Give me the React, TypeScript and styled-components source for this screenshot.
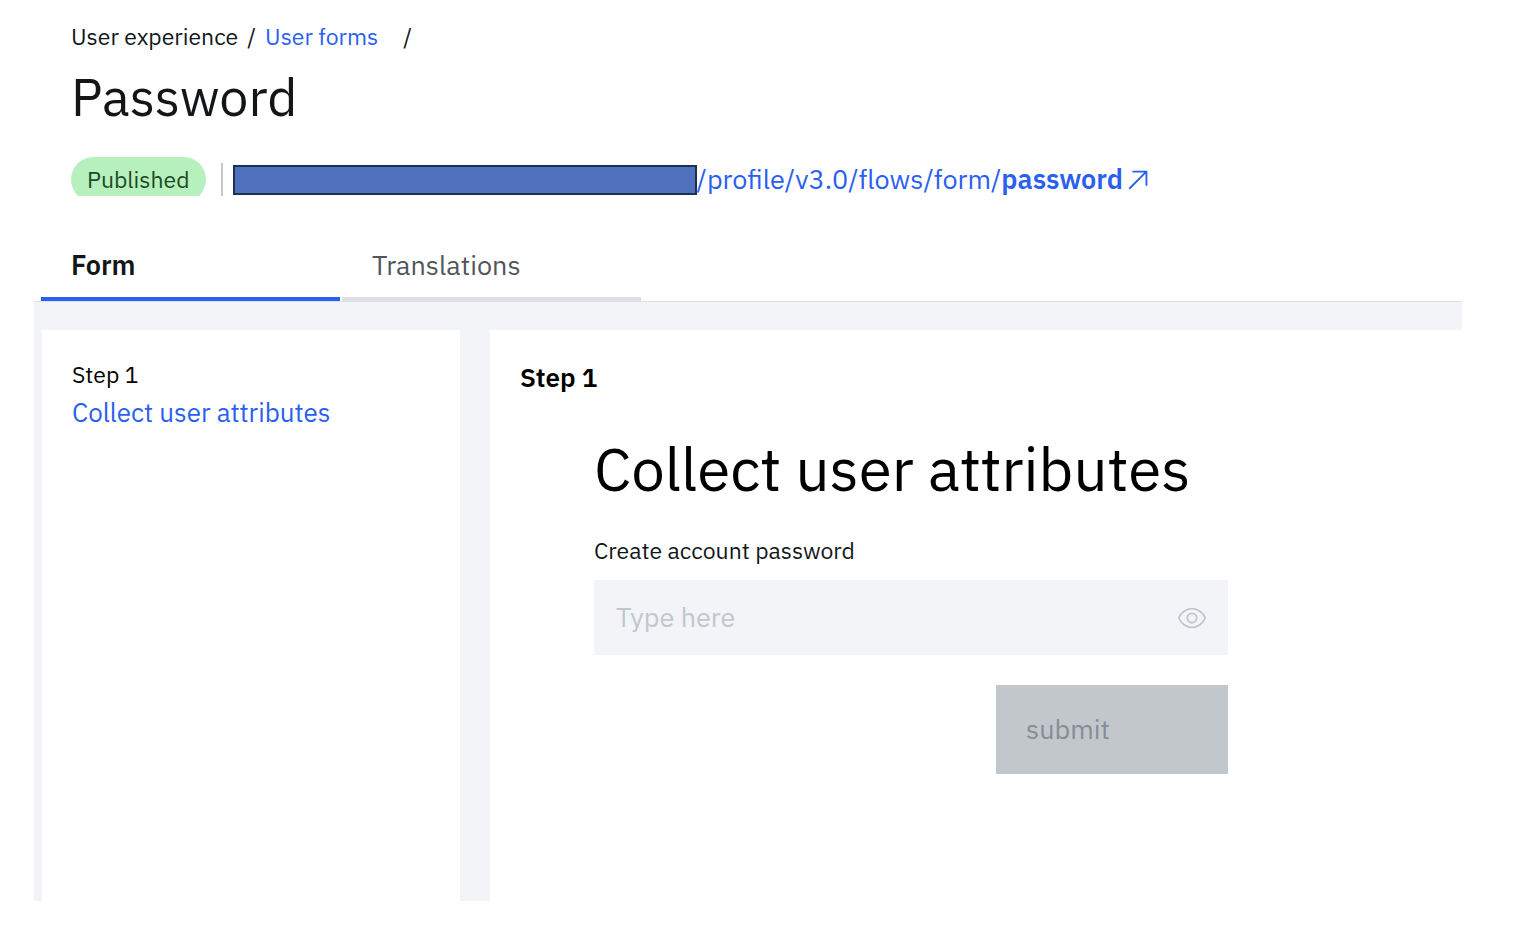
import React from "react";
import styled, { createGlobalStyle } from "styled-components";

const GlobalStyle = createGlobalStyle`
  *, *::before, *::after { box-sizing: border-box; }
  body {
    margin: 0;
    background: #fff;
    color: #121619;
    font-family: "IBM Plex Sans", Roboto, "Liberation Sans", sans-serif;
    font-size: 27px;
    line-height: 38px;
  }
  h1, h2, h3, p { margin: 0; font-weight: 400; }
  a { color: #2a60f0; text-decoration: none; }
  button, input { font: inherit; border: 0; border-radius: 0; }
`;

const Page = styled.div`
  display: flex;
  flex-direction: column;
  min-height: 100vh;
  padding: 21px 56px 45px 34px;
`;

const Header = styled.header`
  padding-left: 37px;
`;

const Breadcrumb = styled.nav`
  display: flex;
  gap: 9px;
  font-size: 23px;
  line-height: 30px;
`;

const CurrentCrumb = styled.span`
  padding-left: 16px;
`;

const Title = styled.h1`
  margin-top: 12px;
  font-size: 52px;
  line-height: 68px;
`;

const StatusRow = styled.div`
  display: flex;
  align-items: flex-end;
  height: 39px;
  margin-top: 26px;
`;

const TagClip = styled.div`
  height: 39px;
  overflow: hidden;
`;

const Tag = styled.span`
  display: block;
  height: 45px;
  padding: 0 16px;
  border-radius: 23px;
  background: #b6f0bc;
  color: #1d4a28;
  font-size: 23px;
  line-height: 44px;
`;

const Divider = styled.span`
  width: 2px;
  height: 33px;
  margin: 0 10px 0 15px;
  background: #c1c7cd;
`;

const FlowLink = styled.a`
  display: flex;
  align-items: center;
  height: 32px;
  line-height: 32px;
  white-space: nowrap;

  strong { font-weight: 600; }
`;

const FlowPath = styled.span`
  height: 34px;
`;

const Redaction = styled.span`
  width: 464px;
  height: 30px;
  border: 2px solid #1c3056;
  background: #5071be;
`;

const Tabs = styled.div`
  display: flex;
  gap: 2px;
  margin-top: 34px;
  padding-left: 7px;
`;

const Tab = styled.button<{ $active?: boolean }>`
  width: 299px;
  height: 71px;
  padding: 2px 30px 0;
  border-bottom: 4px solid ${(p) => (p.$active ? "#2a60f0" : "#dfe0e2")};
  background: none;
  color: ${(p) => (p.$active ? "#121619" : "#50565b")};
  font-weight: ${(p) => (p.$active ? 600 : 400)};
  text-align: left;
`;

const Workspace = styled.main`
  display: flex;
  flex: 1;
  gap: 30px;
  padding: 28px 0 0 8px;
  border-top: 1px solid #dde1e6;
  background: #f2f4f8;
`;

const StepsPanel = styled.aside`
  width: 418px;
  flex: none;
  padding: 25px 30px;
  background: #fff;
  font-size: 26px;
`;

const StepLabel = styled.p`
  color: #000;
  font-size: 23px;
`;

const PreviewPanel = styled.section`
  flex: 1;
  padding: 28px 30px;
  background: #fff;
`;

const StepHeading = styled.h2`
  color: #000;
  font-size: 26px;
  font-weight: 600;
`;

const Form = styled.form`
  display: flex;
  flex-direction: column;
  max-width: 634px;
  margin: 35px 0 0 74px;
`;

const FormTitle = styled.h3`
  color: #000;
  font-size: 60px;
  line-height: 76px;
`;

const Label = styled.label`
  margin-top: 28px;
  font-size: 23px;
  line-height: 30px;
`;

const Field = styled.div`
  display: flex;
  height: 75px;
  margin-top: 15px;
  background: #f2f4f8;
`;

const PasswordInput = styled.input`
  flex: 1;
  min-width: 0;
  padding: 0 22px 2px;
  background: none;

  &::placeholder { color: #c1c7cd; opacity: 1; }
`;

const IconButton = styled.button`
  display: flex;
  align-items: center;
  padding: 0 21px;
  background: none;
  color: #c1c7cd;
`;

const SubmitButton = styled.button`
  align-self: flex-end;
  width: 232px;
  height: 89px;
  margin-top: 30px;
  padding: 0 30px 2px;
  background: #c1c7cb;
  color: #878d96;
  text-align: left;
`;

const ArrowUpRightIcon = () => (
  <svg width="30" height="30" viewBox="0 0 32 32" fill="currentColor" aria-hidden="true">
    <path d="M10 6V8H22.59L6 24.59 7.41 26 24 9.41V22H26V6Z" />
  </svg>
);

const ViewIcon = () => (
  <svg width="30" height="30" viewBox="0 0 32 32" fill="currentColor" aria-hidden="true">
    <path d="M30.94,15.66A16.69,16.69,0,0,0,16,5,16.69,16.69,0,0,0,1.06,15.66a1,1,0,0,0,0,.68A16.69,16.69,0,0,0,16,27,16.69,16.69,0,0,0,30.94,16.34,1,1,0,0,0,30.94,15.66ZM16,25c-5.3,0-10.9-3.93-12.93-9C5.1,10.93,10.7,7,16,7s10.9,3.93,12.93,9C26.9,21.07,21.3,25,16,25Z" />
    <path d="M16,10a6,6,0,1,0,6,6A6,6,0,0,0,16,10Zm0,10a4,4,0,1,1,4-4A4,4,0,0,1,16,20Z" />
  </svg>
);

export default function App() {
  return (
    <>
      <GlobalStyle />
      <Page>
        <Header>
          <Breadcrumb aria-label="Breadcrumb">
            <span>User experience</span>
            <span>/</span>
            <a href="#user-forms">User forms</a>
            <CurrentCrumb>/</CurrentCrumb>
          </Breadcrumb>
          <Title>Password</Title>
          <StatusRow>
            <TagClip>
              <Tag>Published</Tag>
            </TagClip>
            <Divider />
            <FlowLink href="#password-flow">
              <Redaction />
              <FlowPath>
                /profile/v3.0/flows/form/<strong>password</strong>
              </FlowPath>
              <ArrowUpRightIcon />
            </FlowLink>
          </StatusRow>
        </Header>
        <Tabs role="tablist">
          <Tab type="button" role="tab" aria-selected="true" $active>
            Form
          </Tab>
          <Tab type="button" role="tab" aria-selected="false">
            Translations
          </Tab>
        </Tabs>
        <Workspace>
          <StepsPanel>
            <StepLabel>Step 1</StepLabel>
            <a href="#step-1">Collect user attributes</a>
          </StepsPanel>
          <PreviewPanel id="step-1">
            <StepHeading>Step 1</StepHeading>
            <Form>
              <FormTitle>Collect user attributes</FormTitle>
              <Label htmlFor="account-password">Create account password</Label>
              <Field>
                <PasswordInput id="account-password" type="password" placeholder="Type here" disabled />
                <IconButton type="button" aria-label="Show password" disabled>
                  <ViewIcon />
                </IconButton>
              </Field>
              <SubmitButton type="submit" disabled>
                submit
              </SubmitButton>
            </Form>
          </PreviewPanel>
        </Workspace>
      </Page>
    </>
  );
}
